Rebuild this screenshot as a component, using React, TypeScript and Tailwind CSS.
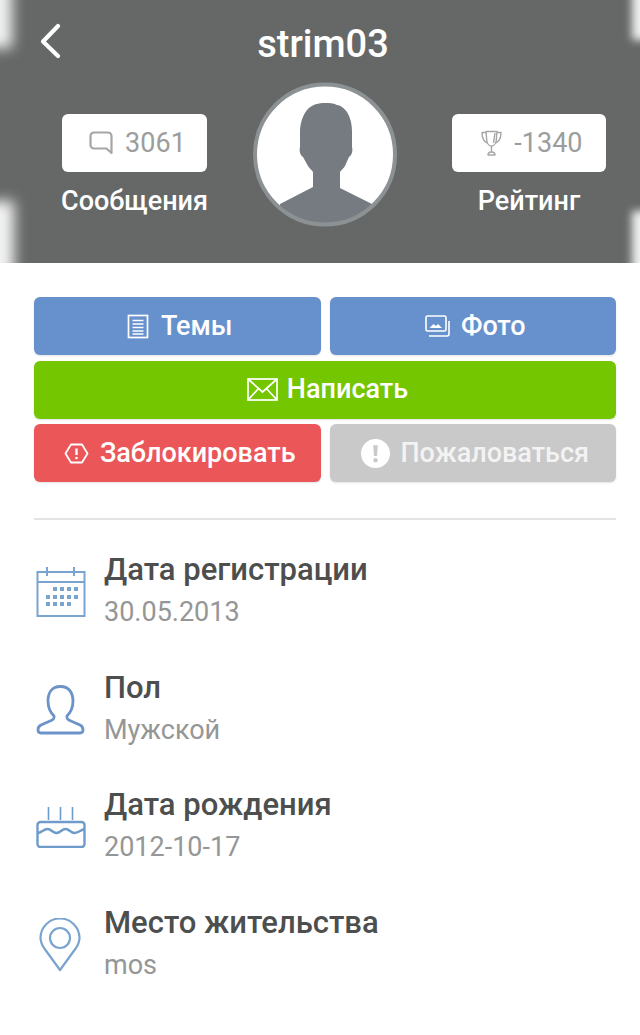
import React from "react";

const Stat = ({ icon, value, label, w }: { icon: React.ReactNode; value: string; label: string; w: string }) => (
  <div className="flex flex-col items-center">
    <div className={`flex h-[58px] items-center justify-center gap-[12px] rounded-[6px] bg-white pl-[6px] text-[27px] text-[#9c9d9d] ${w}`}>
      {icon}
      <span>{value}</span>
    </div>
    <span className="mt-[11px] text-[27px] leading-[36px] font-medium text-white">{label}</span>
  </div>
);

const Btn = ({ color, icon, label, gap, textColor }: { color: string; icon: React.ReactNode; label: string; gap: string; textColor?: string }) => (
  <div className={`flex h-[58px] w-full items-center justify-center rounded-[6px] pl-[5px] text-[27px] font-medium shadow-[0_1px_2px_rgba(0,0,0,0.12)] ${color} ${gap} ${textColor ?? "text-white"}`}>
    {icon}
    <span>{label}</span>
  </div>
);

const Info = ({ icon, title, value }: { icon: React.ReactNode; title: string; value: string }) => (
  <div className="flex h-[117.5px] items-start">
    <div className="flex h-[86px] w-[70px] shrink-0 items-center pl-[2px]">{icon}</div>
    <div className="flex flex-col">
      <span className="text-[31px] leading-[42px] font-medium text-[#4d4e4e]">{title}</span>
      <span className="text-[27px] leading-[42px] text-[#959696]">{value}</span>
    </div>
  </div>
);

const blue = "#7aa4d0";

const Avatar = () => (
  <svg className="ml-[45px] shrink-0" width="144" height="145" viewBox="0 0 144 145">
    <defs>
      <clipPath id="avatarClip">
        <circle cx="72" cy="72.500" r="71" />
      </clipPath>
    </defs>
    <circle cx="72" cy="72.500" r="71" fill="#fff" />
    <g clipPath="url(#avatarClip)">
      <path
        d="M72 21c-6 0-13 1-18 7-4 5-7 13-7 22v15c-1 4 0 8 3 10l5 9c2 3 4 4 5 6v15L27 122c0 0 0 23 0 23h92v-23L87 106V90c1-2 3-3 5-6l4-9c3-2 4-6 3-10V50c0-9-2-15-5-20-3-4-7-7-10-7-4-2-8-2-12-2z"
        fill="#757b80"
      />
    </g>
    <circle cx="72" cy="72.500" r="70" fill="none" stroke="#8c9194" strokeWidth="4" />
  </svg>
);

export default function App() {
  return (
    <div className="h-[1035px] w-[640px] overflow-hidden bg-white" style={{ fontFamily: "Roboto, sans-serif" }}>
      <header className="relative h-[263px] overflow-hidden bg-[#666868]">
        <div className="absolute left-[-14px] top-[-14px] h-[62px] w-[26px] bg-[#f4f4f4] blur-[7px]" />
        <div className="absolute bottom-[-14px] left-[-14px] h-[76px] w-[28px] bg-[#f4f4f4] blur-[7px]" />
        <div className="absolute right-[-12px] top-[-10px] h-[50px] w-[20px] bg-[#f0f0f0] blur-[4px]" />
        <div className="absolute bottom-[-10px] right-[-12px] h-[62px] w-[20px] bg-[#f0f0f0] blur-[4px]" />
        <div className="relative flex h-full flex-col">
          <div className="relative flex h-[82px] items-center justify-center pl-[6px] pt-[6px]">
            <svg className="absolute left-[38px] top-[23px]" width="24" height="36" viewBox="0 0 24 36" fill="none" stroke="#fff" strokeWidth="4.200" strokeLinecap="round" strokeLinejoin="round">
              <path d="M20 3 5 18.500 20 33" />
            </svg>
            <span className="text-[38px] font-medium text-white">strim03</span>
          </div>
          <div className="flex items-start pl-[61px]">
            <div className="mt-[32px]">
              <Stat
                w="w-[145px]"
                value="3061"
                label="Сообщения"
                icon={
                  <svg width="24" height="24" viewBox="0 0 24 24" fill="none" stroke="#a5a6a6" strokeWidth="2.200" strokeLinejoin="round">
                    <path d="M5 1.500h14a3.500 3.500 0 0 1 3.500 3.500v17l-5-4.500H5A3.500 3.500 0 0 1 1.500 14V5A3.500 3.500 0 0 1 5 1.500z" />
                  </svg>
                }
              />
            </div>
            <Avatar />
            <div className="ml-[55px] mt-[32px]">
              <Stat
                w="w-[154px]"
                value="-1340"
                label="Рейтинг"
                icon={
                  <svg width="21" height="26" viewBox="0 0 21 26" fill="none" stroke="#a5a6a6" strokeWidth="1.400" strokeLinejoin="round">
                    <path d="M5 1.500h11l-.8 9.500c-.5 3-2.700 5-4.700 5s-4.200-2-4.700-5z" />
                    <path d="M5 2.500H1c0 5 1.500 9 5.500 10.500M16 2.500h4c0 5-1.500 9-5.500 10.500M14 3l-1.500 10M10.500 16v6" />
                    <path d="M7 25c0-2 1.500-3 3.500-3s3.500 1 3.500 3z" />
                  </svg>
                }
              />
            </div>
          </div>
        </div>
      </header>

      <section className="pl-[34px] pr-[24px] pt-[34px]">
        <div className="flex flex-col gap-[5.5px]">
          <div className="flex gap-[9px]">
            <Btn
              color="bg-[#6791cc]"
              gap="gap-[12px]"
              label="Темы"
              icon={
                <svg width="22" height="25" viewBox="0 0 22 25" fill="none" stroke="#fff" strokeWidth="1.700">
                  <rect x="1.500" y="1.500" width="19" height="22" />
                  <path d="M5.500 6.500h11M5.500 10h11M5.500 13.500h11M5.500 17h11M5.500 20h11" strokeWidth="1.400" />
                </svg>
              }
            />
            <Btn
              color="bg-[#6791cc]"
              gap="gap-[11px]"
              label="Фото"
              icon={
                <svg width="25" height="22" viewBox="0 0 25 22" fill="none" stroke="#fff" strokeWidth="1.600">
                  <rect x="1" y="1" width="20" height="15" rx="1.500" />
                  <path d="M24 6v13a2 2 0 0 1-2 2H4" />
                  <path d="M4.500 13l4-4 2.500 2 2-2 4 4z" fill="#fff" stroke="none" />
                </svg>
              }
            />
          </div>
          <Btn
            color="bg-[#74c600]"
            gap="gap-[9px]"
            label="Написать"
            icon={
              <svg width="31" height="23" viewBox="0 0 31 23" fill="none" stroke="#fff" strokeWidth="1.700">
                <rect x="1" y="1" width="29" height="21" />
                <path d="M1 1 15.500 14 30 1M1 22l11-12M30 22 19 10" />
              </svg>
            }
          />
          <div className="flex gap-[9px]">
            <Btn
              color="bg-[#eb5659]"
              gap="gap-[11px]"
              label="Заблокировать"
              icon={
                <svg width="25" height="21" viewBox="0 0 25 21" fill="none" stroke="#fff" strokeWidth="1.800" strokeLinejoin="round">
                  <path d="M7 1.500h11l5.500 9-5.500 9H7l-5.500-9z" />
                  <path d="M12.500 5.500v6.500" strokeWidth="2.400" />
                  <circle cx="12.500" cy="15" r="1.300" fill="#fff" stroke="none" />
                </svg>
              }
            />
            <Btn
              color="bg-[#c9c9c9]"
              gap="gap-[10px]"
              textColor="text-[#f3f3f3]"
              label="Пожаловаться"
              icon={
                <svg width="29" height="29" viewBox="0 0 28 28">
                  <circle cx="14" cy="14" r="14" fill="#fff" />
                  <path d="M11.800 6h4.400l-.7 10.500h-3z" fill="#c9c9c9" />
                  <circle cx="14" cy="20.500" r="2.100" fill="#c9c9c9" />
                </svg>
              }
            />
          </div>
        </div>

        <div className="mt-[36px] h-[2px] bg-[#e3e4e4]" />

        <div className="mt-[29px] flex flex-col">
          <Info
            title="Дата регистрации"
            value="30.05.2013"
            icon={
              <svg width="50" height="50" viewBox="0 0 50 50" fill="none" stroke={blue} strokeWidth="2">
                <rect x="1.500" y="5" width="47" height="44" />
                <path d="M1.500 15h47M11 0v9M38 0v9" />
                <g fill={blue} stroke="none">
                  <rect x="17" y="20" width="4" height="4" />
                  <rect x="24" y="20" width="4" height="4" />
                  <rect x="31" y="20" width="4" height="4" />
                  <rect x="38" y="20" width="4" height="4" />
                  <rect x="10" y="28" width="4" height="4" />
                  <rect x="17" y="28" width="4" height="4" />
                  <rect x="24" y="28" width="4" height="4" />
                  <rect x="31" y="28" width="4" height="4" />
                  <rect x="38" y="28" width="4" height="4" />
                  <rect x="10" y="35" width="4" height="4" />
                  <rect x="17" y="35" width="4" height="4" />
                  <rect x="24" y="35" width="4" height="4" />
                  <rect x="31" y="35" width="4" height="4" />
                </g>
              </svg>
            }
          />
          <Info
            title="Пол"
            value="Мужской"
            icon={
              <svg width="50" height="50" viewBox="0 0 50 50" fill="none" stroke="#6c94c9" strokeWidth="2.800">
                <path d="M24.500 1.500C15 1.500 12 9 12 16c0 7 3 12 6 15 1 2-1 4-4 5l-9 4c-4 2-4 8 0 8h39c4 0 4-6 0-8l-9-4c-3-1-5-3-4-5 3-3 6-8 6-15 0-7-3-14.500-12.500-14.500z" />
              </svg>
            }
          />
          <Info
            title="Дата рождения"
            value="2012-10-17"
            icon={
              <svg width="50" height="41" viewBox="0 0 50 41" fill="none" stroke="#6f9bca" strokeWidth="2.400">
                <path d="M12.500 0v13M24.500 0v13M36.500 0v13" strokeWidth="1.600" />
                <rect x="1.500" y="15" width="47" height="25" rx="3" />
                <path d="M1.500 26c4 0 6-4 10-4s5 4 9 4 5-4 9-4 5 4 9 4 6-3 10-4" />
              </svg>
            }
          />
          <Info
            title="Место жительства"
            value="mos"
            icon={
              <svg className="ml-[3px]" width="42" height="54" viewBox="0 0 42 54" fill="none" stroke={blue} strokeWidth="2.200" strokeLinejoin="round">
                <path d="M21 52 5 30C2.500 26 1.500 23 1.500 20a19.500 19.500 0 0 1 39 0c0 3-1 6-3.500 10z" />
                <circle cx="21" cy="20" r="10" />
              </svg>
            }
          />
        </div>
      </section>
    </div>
  );
}
